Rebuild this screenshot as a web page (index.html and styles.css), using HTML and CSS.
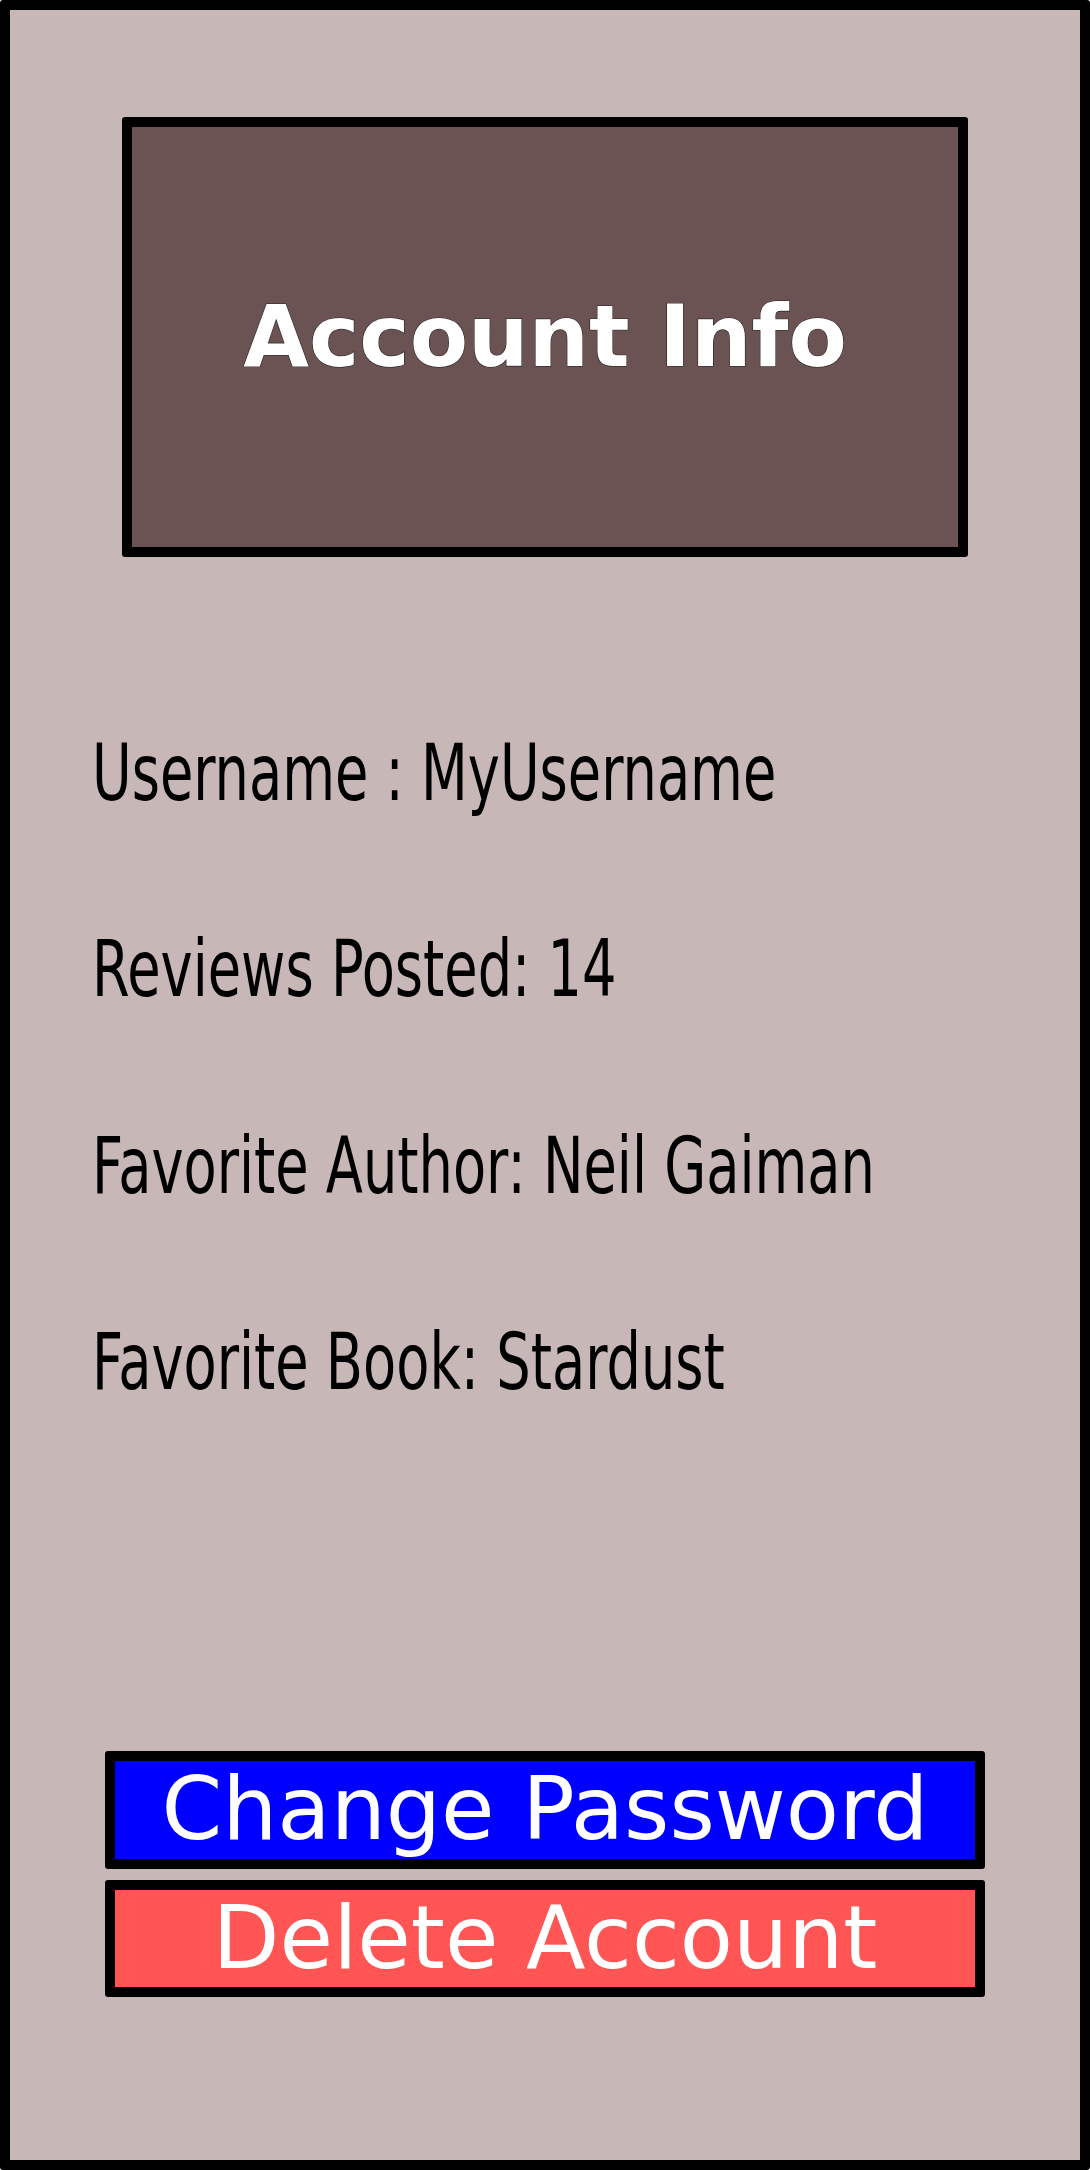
FILE: index.html
```html
<!DOCTYPE html>
<html lang="en">
<head>
<meta charset="utf-8">
<title>Account Info</title>
<link rel="stylesheet" href="styles.css">
</head>
<body>
<div class="frame">
  <div class="header">
    <h1 class="title">Account Info</h1>
  </div>
  <div class="info">
    <div class="line"><span>Username : MyUsername</span></div>
    <div class="line"><span>Reviews Posted: 14</span></div>
    <div class="line"><span>Favorite Author: Neil Gaiman</span></div>
    <div class="line"><span>Favorite Book: Stardust</span></div>
  </div>
  <div class="actions">
    <button class="btn btn-change">Change Password</button>
    <button class="btn btn-delete">Delete Account</button>
  </div>
</div>
</body>
</html>
```
FILE: styles.css
```css
html, body {
  margin: 0;
  padding: 0;
}
body {
  width: 1090px;
  height: 2170px;
  overflow: hidden;
  font-family: "DejaVu Sans", "Liberation Sans", sans-serif;
}
.frame {
  box-sizing: border-box;
  width: 1090px;
  height: 2170px;
  border: 10px solid #000;
  border-radius: 3px;
  background: #c8b7b7;
  display: flex;
  flex-direction: column;
  overflow: hidden;
}
.header {
  box-sizing: border-box;
  margin: 107px 0 0 112px;
  width: 846px;
  height: 440px;
  border: 10px solid #000;
  border-radius: 3px;
  background: #6c5353;
  display: flex;
  align-items: center;
  justify-content: center;
}
.title {
  margin: 0;
  font-family: "DejaVu Sans", sans-serif;
  font-weight: bold;
  font-size: 85px;
  line-height: 1.164;
  color: #fff;
  -webkit-text-stroke: 1.2px #2a2222;
  paint-order: stroke fill;
}
.info {
  margin-top: 166px;
  padding-left: 82px;
  width: 900px;
  display: flex;
  flex-direction: column;
  gap: 96.3px;
}
.line {
  width: 900px;
  height: 100px;
  overflow: hidden;
  font-size: 78px;
  line-height: 100px;
  color: #000;
  white-space: nowrap;
}
.line span {
  display: inline-block;
  transform: scaleX(0.695);
  transform-origin: left center;
}
.actions {
  margin-top: auto;
  margin-left: 95px;
  padding-bottom: 163px;
  display: flex;
  flex-direction: column;
  gap: 11px;
  width: 880px;
}
.btn {
  box-sizing: border-box;
  width: 880px;
  height: 117.5px;
  border: 10px solid #000;
  border-radius: 3px;
  padding: 0;
  margin: 0;
  font-family: "DejaVu Sans", sans-serif;
  font-size: 87px;
  line-height: 97px;
  color: #fff;
  display: flex;
  align-items: center;
  justify-content: center;
}
.btn-change {
  background: #0000ff;
}
.btn-delete {
  background: #ff5555;
}
```
